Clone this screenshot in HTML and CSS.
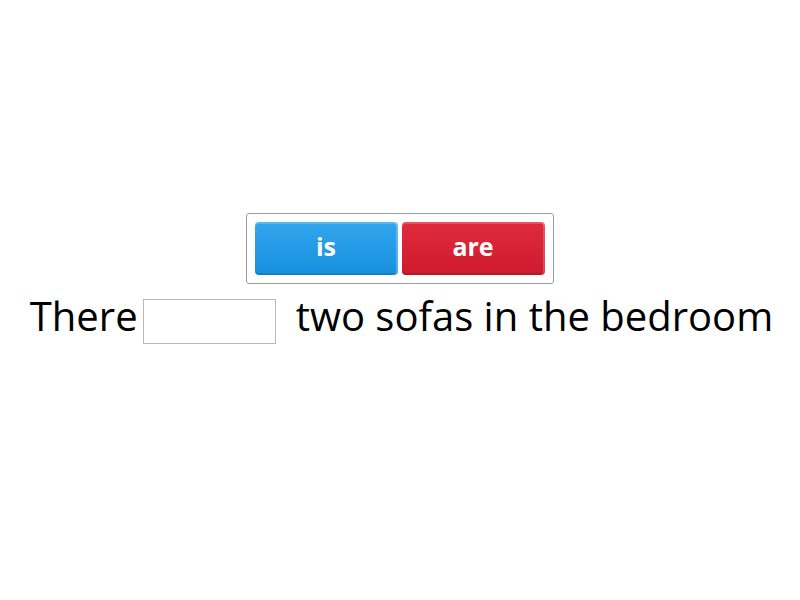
FILE: index.html
```html
<!DOCTYPE html>
<html>
<head>
<meta charset="utf-8">
<link rel="stylesheet" href="styles.css">
</head>
<body>
<div class="page">
  <div class="choices">
    <div class="btn btn-blue">is</div>
    <div class="btn btn-red">are</div>
  </div>
  <div class="sentence">
    <span class="word">There</span>
    <span class="blank"></span>
    <span class="word rest">two sofas in the bedroom</span>
  </div>
</div>
</body>
</html>
```
FILE: styles.css
```css
html, body {
  margin: 0;
  padding: 0;
  background: #ffffff;
}
body {
  width: 800px;
  height: 600px;
  font-family: "Open Sans", "Noto Sans", sans-serif;
  color: #000;
}
.page {
  display: flex;
  flex-direction: column;
  align-items: center;
  padding-top: 213px;
}
.choices {
  display: flex;
  gap: 4px;
  padding: 8px;
  border: 1px solid #9c9c9c;
  border-radius: 3px;
  margin-left: -1px;
}
.btn {
  width: 143px;
  height: 53px;
  box-sizing: border-box;
  border-radius: 4px;
  color: #fff;
  font-weight: 700;
  font-size: 25px;
  display: flex;
  align-items: center;
  justify-content: center;
  padding-bottom: 5px;
}
.btn-blue {
  background: linear-gradient(#31a6ee, #1890de);
  box-shadow: inset -2px 0 0 rgba(255,255,255,0.25), inset 0 2px 0 rgba(255,255,255,0.2), inset 0 -2px 0 rgba(0,0,0,0.12);
}
.btn-red {
  background: linear-gradient(#e02a3c, #cf1a2f);
  box-shadow: inset -2px 0 0 rgba(255,255,255,0.2), inset 0 2px 0 rgba(255,255,255,0.2), inset 0 -2px 0 rgba(0,0,0,0.12);
}
.sentence {
  display: flex;
  align-items: flex-start;
  font-size: 40px;
  line-height: 54px;
  margin-top: 5px;
  margin-left: 3px;
}
.blank {
  width: 131px;
  height: 43px;
  border: 1px solid #b8b8b8;
  margin-top: 10px;
  margin-left: 5px;
  margin-right: 20px;
}
```
